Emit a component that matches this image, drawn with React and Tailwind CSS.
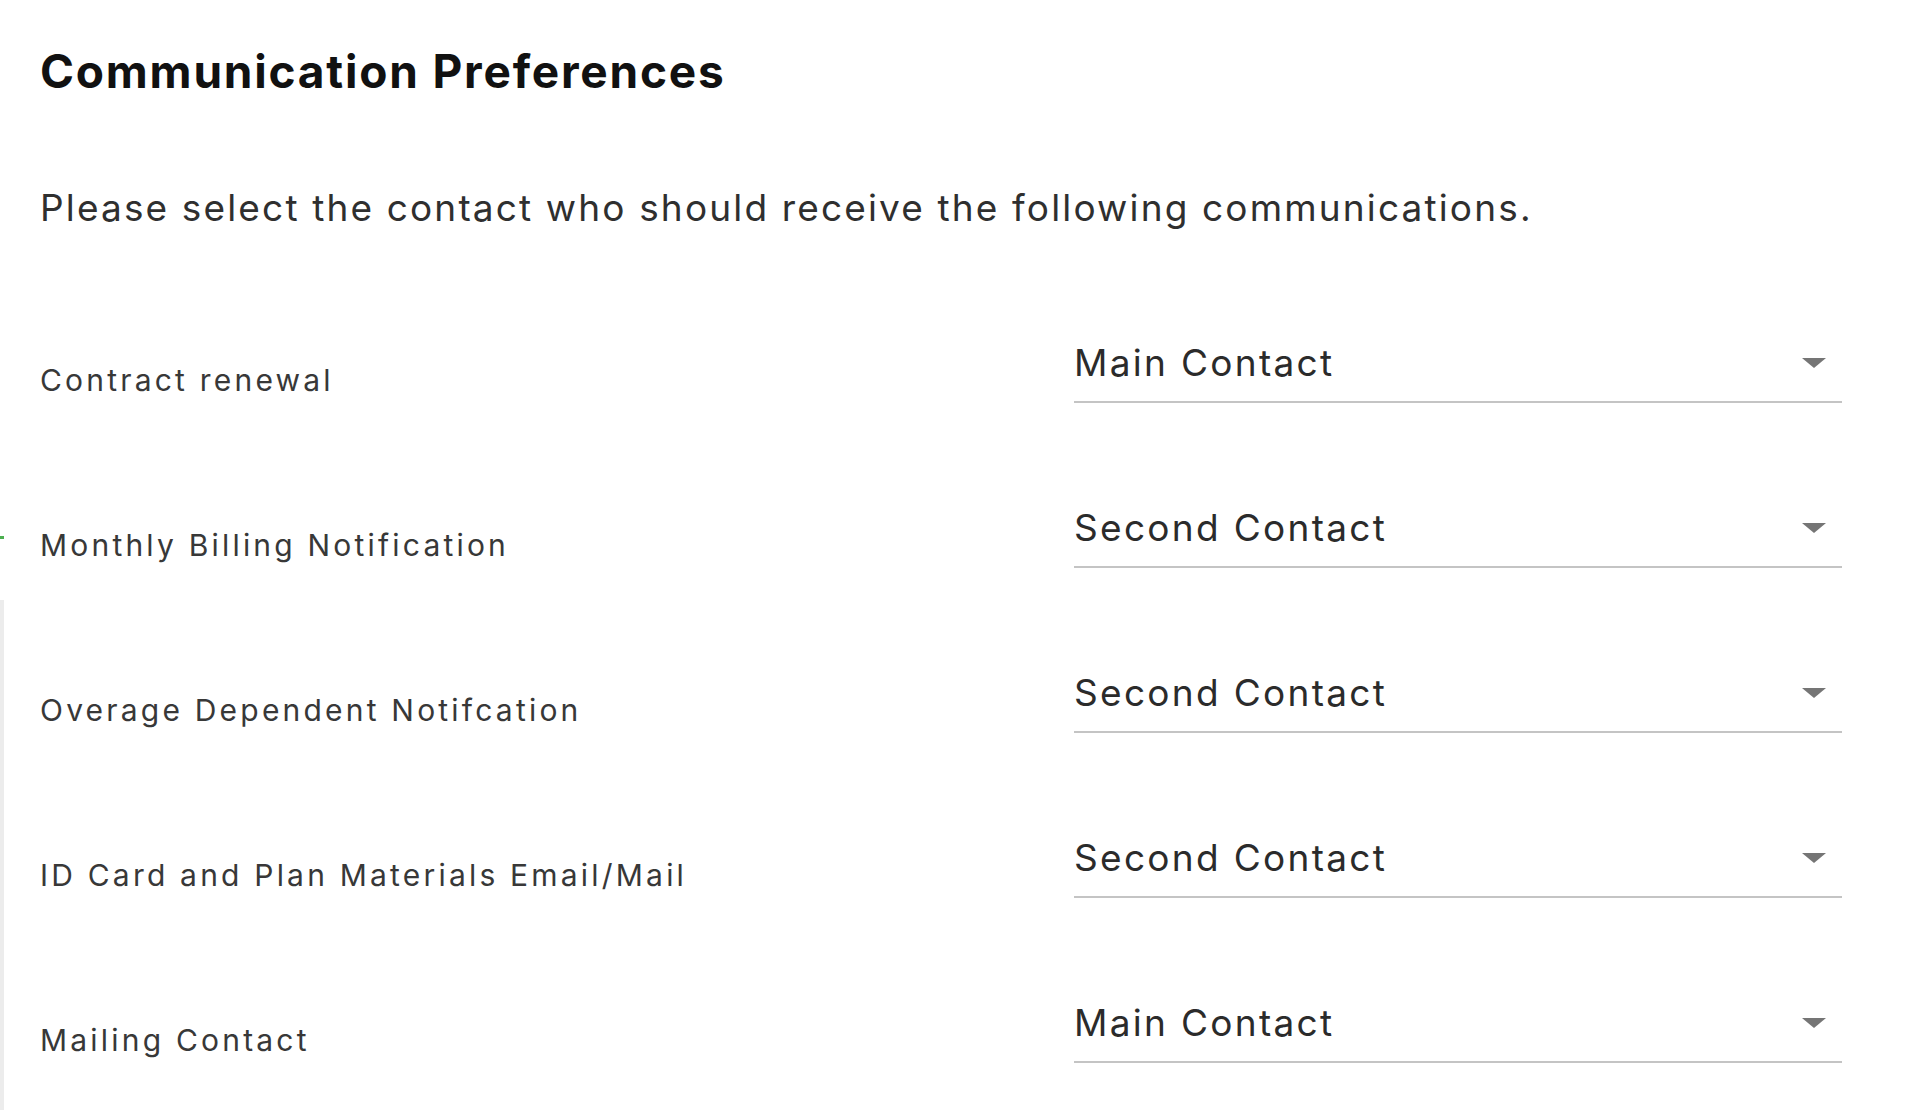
import React from "react"

const rows = [
  { label: "Contract renewal", value: "Main Contact" },
  { label: "Monthly Billing Notification", value: "Second Contact" },
  { label: "Overage Dependent Notifcation", value: "Second Contact" },
  { label: "ID Card and Plan Materials Email/Mail", value: "Second Contact" },
  { label: "Mailing Contact", value: "Main Contact" },
]

const SelectField = ({ value }) => (
  <div className="w-[768px] flex items-center justify-between pb-[12px] border-b-2 border-[#c4c4c4]">
    <span className="text-[37px] leading-[52px] tracking-[2.3px] text-[#2b2b2b]">{value}</span>
    <svg width="24" height="10" viewBox="0 0 24 10" className="mr-[16px]">
      <polygon points="0,0 24,0 12,10" fill="#757575" />
    </svg>
  </div>
)

export default function App() {
  return (
    <div className="relative min-h-screen w-full bg-white font-['Inter',sans-serif]">
      {/* left edge marks from the surrounding page */}
      <div className="absolute left-0 top-[536px] w-[4px] h-[3px] bg-[#4caf50]" />
      <div className="absolute left-0 top-[600px] bottom-0 w-[4px] bg-[#ececec]" />

      <div className="pl-[40px] pt-[46px]">
        <h1 className="text-[46px] leading-[50px] font-bold tracking-[1.8px] text-[#111]">Communication Preferences</h1>
        <p className="mt-[88px] text-[37px] leading-[48px] tracking-[2.15px] text-[#2f2f2f]">
          Please select the contact who should receive the following communications.
        </p>

        <div className="mt-[105px] flex flex-col gap-[99px]">
          {rows.map((row) => (
            <div key={row.label} className="flex items-start">
              <label className="w-[1034px] mt-[23px] text-[30px] leading-[40px] tracking-[3.2px] text-[#383838]">
                {row.label}
              </label>
              <SelectField value={row.value} />
            </div>
          ))}
        </div>
      </div>
    </div>
  )
}
